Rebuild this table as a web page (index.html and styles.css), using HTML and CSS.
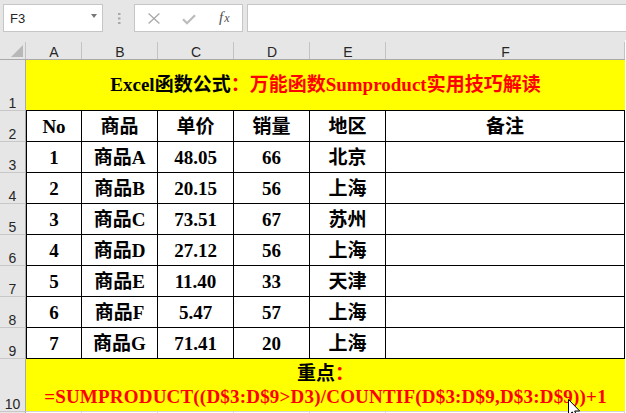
FILE: index.html
```html
<!DOCTYPE html>
<html lang="zh-CN">
<head>
<meta charset="utf-8">
<title>Excel</title>
<link rel="stylesheet" href="styles.css">
</head>
<body>
<div class="app">
  <div class="toolbar">
    <div class="namebox"><span class="ref">F3</span><span class="caret"></span></div>
    <div class="grip">
      <svg width="3" height="11" viewBox="0 0 3 11"><rect x="0" y="0" width="2.5" height="2" fill="#a8a8a8"/><rect x="0" y="4.5" width="2.5" height="2" fill="#a8a8a8"/><rect x="0" y="9" width="2.5" height="2" fill="#a8a8a8"/></svg>
    </div>
    <div class="fxbox">
      <svg class="ico-x" width="12" height="11" viewBox="0 0 12 11"><path d="M0.6 0.6 L11.4 10.4 M11.4 0.6 L0.6 10.4" stroke="#a9a9a9" stroke-width="1.3" fill="none"/></svg>
      <svg class="ico-ok" width="14" height="11" viewBox="0 0 14 11"><path d="M1 5.2 L5 9.2 L13 1.2" stroke="#bcbcbc" stroke-width="2.3" fill="none"/></svg>
      <span class="fx"><span class="fx-f">f</span><span class="fx-x">x</span></span>
    </div>
    <div class="finput"></div>
  </div>

  <div class="sheet">
    <div class="corner"><span class="tri"></span></div>
    <div class="ch">A</div>
    <div class="ch">B</div>
    <div class="ch">C</div>
    <div class="ch">D</div>
    <div class="ch">E</div>
    <div class="ch">F</div>

    <div class="rh">1</div>
    <div class="cell title"><span>Excel函数公式</span><span class="red">：万能函数Sumproduct实用技巧解读</span></div>

    <div class="rh">2</div>
    <div class="cell b first">No</div>
    <div class="cell b">商品</div>
    <div class="cell b">单价</div>
    <div class="cell b">销量</div>
    <div class="cell b">地区</div>
    <div class="cell b">备注</div>

    <div class="rh">3</div>
    <div class="cell b first">1</div>
    <div class="cell b">商品A</div>
    <div class="cell b">48.05</div>
    <div class="cell b">66</div>
    <div class="cell b">北京</div>
    <div class="cell b"></div>

    <div class="rh">4</div>
    <div class="cell b first">2</div>
    <div class="cell b">商品B</div>
    <div class="cell b">20.15</div>
    <div class="cell b">56</div>
    <div class="cell b">上海</div>
    <div class="cell b"></div>

    <div class="rh">5</div>
    <div class="cell b first">3</div>
    <div class="cell b">商品C</div>
    <div class="cell b">73.51</div>
    <div class="cell b">67</div>
    <div class="cell b">苏州</div>
    <div class="cell b"></div>

    <div class="rh">6</div>
    <div class="cell b first">4</div>
    <div class="cell b">商品D</div>
    <div class="cell b">27.12</div>
    <div class="cell b">56</div>
    <div class="cell b">上海</div>
    <div class="cell b"></div>

    <div class="rh">7</div>
    <div class="cell b first">5</div>
    <div class="cell b">商品E</div>
    <div class="cell b">11.40</div>
    <div class="cell b">33</div>
    <div class="cell b">天津</div>
    <div class="cell b"></div>

    <div class="rh">8</div>
    <div class="cell b first">6</div>
    <div class="cell b">商品F</div>
    <div class="cell b">5.47</div>
    <div class="cell b">57</div>
    <div class="cell b">上海</div>
    <div class="cell b"></div>

    <div class="rh">9</div>
    <div class="cell b first">7</div>
    <div class="cell b">商品G</div>
    <div class="cell b">71.41</div>
    <div class="cell b">20</div>
    <div class="cell b">上海</div>
    <div class="cell b"></div>

    <div class="rh">10</div>
    <div class="cell note">
      <div class="line"><span>重点</span><span class="red">：</span></div>
      <div class="line formula red">=SUMPRODUCT((D$3:D$9&gt;D3)/COUNTIF(D$3:D$9,D$3:D$9))+1</div>
    </div>

    <div class="rh"></div>
    <div class="g"></div>
    <div class="g"></div>
    <div class="g"></div>
    <div class="g"></div>
    <div class="g"></div>
    <div class="g"></div>
  </div>

  <svg class="cursor" width="13" height="20" viewBox="0 0 13 20"><path d="M0.5 0.5 L0.5 16.5 L4.3 12.9 L7 19 L9.3 18 L6.7 12 L11.7 12 Z" fill="#fff" stroke="#000" stroke-width="1"/></svg>
</div>
</body>
</html>
```

FILE: styles.css
```css
html, body {
  margin: 0;
  padding: 0;
}
body {
  width: 626px;
  height: 413px;
  overflow: hidden;
  background: #fff;
  font-family: "Liberation Sans", Arial, sans-serif;
}
.app {
  position: relative;
  width: 626px;
  height: 413px;
  overflow: hidden;
}

/* ---------- formula bar ---------- */
.toolbar {
  height: 40px;
  box-sizing: border-box;
  background: #e6e6e6;
  display: flex;
  align-items: flex-start;
  padding: 4px 0 0 3px;
}
.namebox {
  width: 100px;
  height: 28px;
  box-sizing: border-box;
  border: 1px solid #c6c6c6;
  background: #fff;
  display: flex;
  align-items: center;
  justify-content: space-between;
  padding: 0 5px 0 6px;
}
.ref {
  font-size: 13px;
  color: #262626;
}
.caret {
  width: 0;
  height: 0;
  border-left: 3.5px solid transparent;
  border-right: 3.5px solid transparent;
  border-top: 4px solid #777;
  margin-bottom: 4px;
}
.grip {
  width: 31px;
  display: flex;
  justify-content: center;
  padding-top: 9px;
}
.grip svg {
  display: block;
  margin-left: 1px;
}
.fxbox {
  width: 109px;
  height: 28px;
  box-sizing: border-box;
  border: 1px solid #c6c6c6;
  background: #fff;
  display: flex;
  align-items: center;
  padding-left: 13px;
}
.ico-x {
  display: block;
  margin-top: 1px;
}
.ico-ok {
  display: block;
  margin-left: 22px;
  margin-top: 2px;
}
.fx {
  margin-left: 23px;
  font-family: "Liberation Serif", serif;
  font-style: italic;
  color: #505050;
  display: flex;
  align-items: baseline;
  margin-top: -2px;
}
.fx-f {
  font-size: 15px;
}
.fx-x {
  font-size: 12px;
  margin-left: 1px;
}
.finput {
  flex: 1;
  height: 28px;
  box-sizing: border-box;
  margin-left: 4px;
  border: 1px solid #c6c6c6;
  border-right: none;
  background: #fff;
}

/* ---------- sheet ---------- */
.sheet {
  display: grid;
  grid-template-columns: 26px 56px repeat(4, 76px) 239px;
  grid-template-rows: 20px 51px repeat(8, 31px) 53px 31px;
}
.sheet > div {
  box-sizing: border-box;
  min-width: 0;
}
.corner,
.ch {
  background:
    linear-gradient(#c3c3c3, #c3c3c3) right 0 bottom 0 / 1px 17px no-repeat,
    #e6e6e6;
  border-bottom: 1px solid #a9a9a9;
}
.corner {
  display: flex;
  align-items: flex-end;
  justify-content: flex-end;
  padding: 0 3px 2px 0;
}
.tri {
  width: 12px;
  height: 12px;
  background: #b8b8b8;
  clip-path: polygon(100% 0, 100% 100%, 0 100%);
}
.ch {
  font-size: 14px;
  line-height: 16px;
  padding-top: 4px;
  color: #262626;
  text-align: center;
}
.rh {
  background: #e6e6e6;
  border-right: 1px solid #a9a9a9;
  border-bottom: 1px solid #c8c8c8;
  font-size: 14px;
  line-height: 14px;
  color: #262626;
  display: flex;
  align-items: flex-end;
  justify-content: center;
}
.cell {
  font: 700 19px/22px "Liberation Serif", "Noto Sans CJK SC", serif;
  color: #000;
  display: flex;
  align-items: center;
  justify-content: center;
  white-space: nowrap;
}
.red {
  color: #ff0000;
}
.title {
  grid-column: span 6;
  background: #ffff00;
  border-bottom: 1px solid #000;
}
.b {
  background: #fff;
  border-right: 1px solid #000;
  border-bottom: 1px solid #000;
  padding-top: 1px;
}
.b.first {
  border-left: 1px solid #000;
}
.note {
  grid-column: span 6;
  background: #ffff00;
  border-bottom: 1px solid #d4d4d4;
  flex-direction: column;
  line-height: 23px;
}
.line {
  display: block;
}
.formula {
  letter-spacing: 0.2px;
}
.g {
  background: #fff;
  border-right: 1px solid #d4d4d4;
}
.cursor {
  position: absolute;
  left: 568px;
  top: 399px;
}
```
